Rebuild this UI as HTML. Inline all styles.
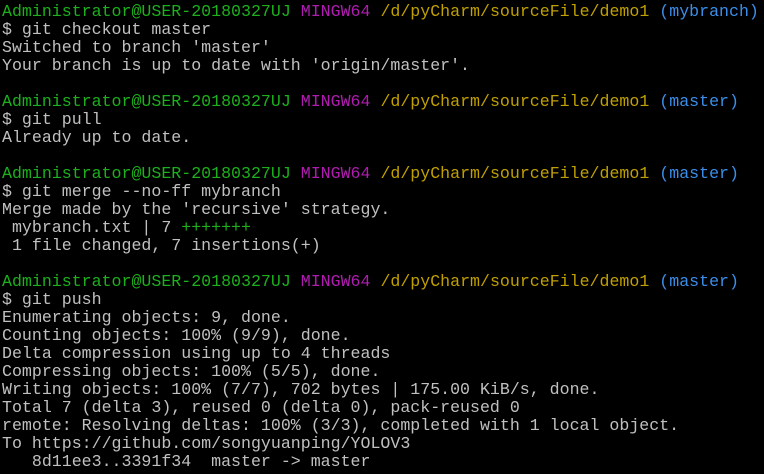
<!DOCTYPE html><html><head><style>
html,body{margin:0;background:#000;width:764px;height:474px;overflow:hidden}
pre{margin:0;padding:3px 0 0 2px;font-family:"Liberation Mono",monospace;font-size:16.6px;line-height:18px;color:#c0c0c0;white-space:pre}
.g{color:#1cb01c}.p{color:#b01cb0}.y{color:#c0a000}.b{color:#3b8eea}
</style></head><body><pre><span class="g">Administrator@USER-20180327UJ</span> <span class="p">MINGW64</span> <span class="y">/d/pyCharm/sourceFile/demo1</span> <span class="b">(mybranch)</span>
$ git checkout master
Switched to branch 'master'
Your branch is up to date with 'origin/master'.

<span class="g">Administrator@USER-20180327UJ</span> <span class="p">MINGW64</span> <span class="y">/d/pyCharm/sourceFile/demo1</span> <span class="b">(master)</span>
$ git pull
Already up to date.

<span class="g">Administrator@USER-20180327UJ</span> <span class="p">MINGW64</span> <span class="y">/d/pyCharm/sourceFile/demo1</span> <span class="b">(master)</span>
$ git merge --no-ff mybranch
Merge made by the 'recursive' strategy.
 mybranch.txt | 7 <span class="g">+++++++</span>
 1 file changed, 7 insertions(+)

<span class="g">Administrator@USER-20180327UJ</span> <span class="p">MINGW64</span> <span class="y">/d/pyCharm/sourceFile/demo1</span> <span class="b">(master)</span>
$ git push
Enumerating objects: 9, done.
Counting objects: 100% (9/9), done.
Delta compression using up to 4 threads
Compressing objects: 100% (5/5), done.
Writing objects: 100% (7/7), 702 bytes | 175.00 KiB/s, done.
Total 7 (delta 3), reused 0 (delta 0), pack-reused 0
remote: Resolving deltas: 100% (3/3), completed with 1 local object.
To https://github.com/songyuanping/YOLOV3
   8d11ee3..3391f34  master -&gt; master</pre></body></html>
